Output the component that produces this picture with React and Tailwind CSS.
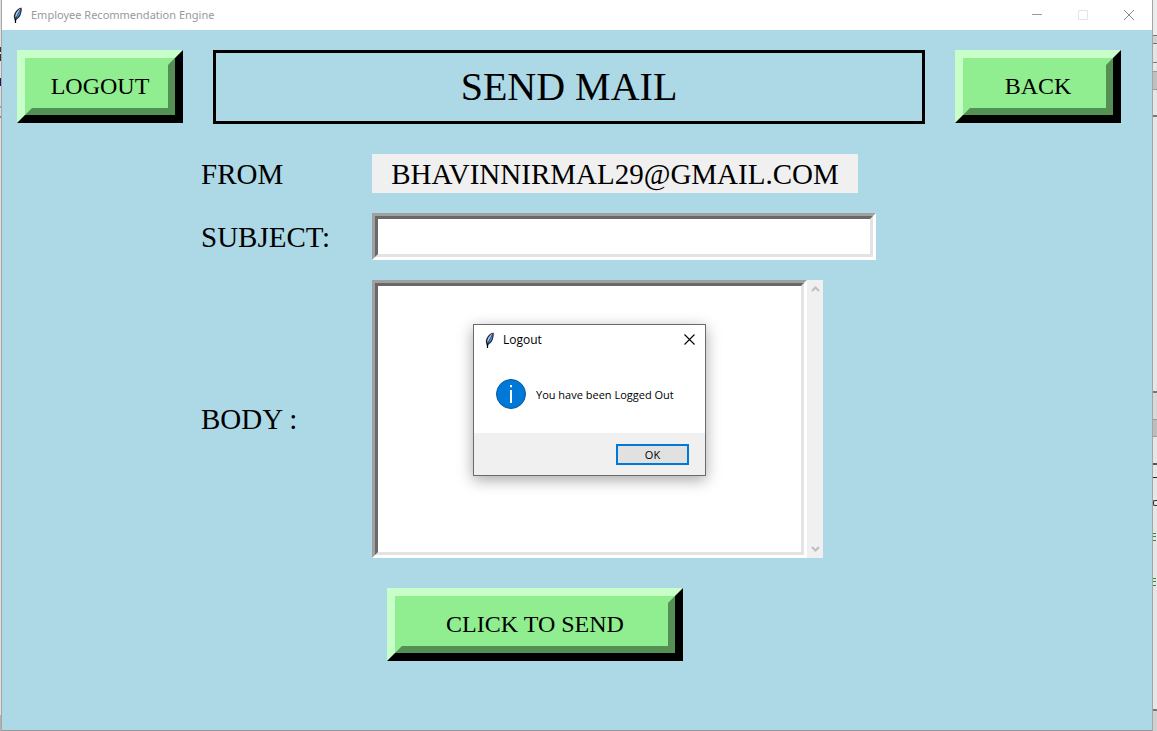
import React from "react";

function Feather() {
  return (
    <svg width="16" height="16" viewBox="0 0 16 16" aria-hidden="true" className="shrink-0">
      <path d="M11.4 0.4C8.6 0.8 5.8 3.4 4.4 6.8C3.6 8.8 3.6 10.8 4.6 12.4L5.2 15.4L6.6 12.4C9 11 10.6 9 11 6.4C11.8 4 12 1.8 11.4 0.4Z" fill="#1d2733" />
      <path d="M10.6 1.6C8.4 2.6 6.4 5 5.4 8L5.2 11C7.2 8.6 8.8 5 10.6 1.6Z" fill="#a9c8ea" />
      <path d="M10.8 2.2C9.2 5 7.4 8.4 5.9 11.6C8.4 10 9.8 8 10.2 5.8Z" fill="#4a8ae0" />
      <path d="M5.5 16V12" fill="none" stroke="#000" strokeWidth="1.2" />
    </svg>
  );
}

function BevelButton({ children, className }) {
  return (
    <button
      type="button"
      className={`flex h-[73px] shrink-0 cursor-pointer border-8 border-t-[#c8ffc8] border-l-[#c8ffc8] border-r-black border-b-black text-2xl text-black ${className}`}
    >
      <span className="flex h-full w-full items-center justify-center border-[7px] border-t-[#90ee90] border-l-[#90ee90] border-r-[#548f54] border-b-[#548f54] bg-[#90ee90] pb-0.5 whitespace-nowrap">
        {children}
      </span>
    </button>
  );
}

const sunkenOuter = "border-[3px] border-t-[#a0a0a0] border-l-[#a0a0a0] border-r-white border-b-white";
const sunkenInner =
  "block border-[3px] border-t-[#696969] border-l-[#696969] border-r-[#e3e3e3] border-b-[#e3e3e3] bg-white px-1 outline-none";

function Chevron({ up }) {
  return (
    <svg width="9" height="6" viewBox="0 0 9 6" aria-hidden="true">
      <path d={up ? "M1 5L4.5 1.5L8 5" : "M1 1L4.5 4.5L8 1"} fill="none" stroke="#bfbfbf" strokeWidth="2" />
    </svg>
  );
}

function TitleBar() {
  return (
    <header className="flex h-[30px] items-center bg-white pl-2 font-['Noto_Sans',sans-serif] text-[11px] text-[#999]">
      <Feather />
      <span className="ml-[5px] flex-1">Employee Recommendation Engine</span>
      <button type="button" aria-label="Minimize" className="flex h-full w-[46px] items-center justify-center">
        <svg width="10" height="10" viewBox="0 0 10 10"><path d="M0 4.5H10" stroke="#999" /></svg>
      </button>
      <button type="button" aria-label="Maximize" disabled className="flex h-full w-[46px] items-center justify-center">
        <svg width="10" height="10" viewBox="0 0 10 10"><path d="M.5 .5H9.5V9.5H.5Z" fill="none" stroke="#e5e5e5" /></svg>
      </button>
      <button type="button" aria-label="Close" className="flex h-full w-[46px] items-center justify-center">
        <svg width="10" height="10" viewBox="0 0 10 10"><path d="M0 0L10 10M10 0L0 10" stroke="#8a8a8a" /></svg>
      </button>
    </header>
  );
}

function LogoutDialog() {
  return (
    <section
      role="dialog"
      aria-labelledby="dialog-title"
      className="absolute top-[324px] left-[473px] w-[233px] border border-[#6b6b6b] bg-white font-['Open_Sans',sans-serif] text-xs text-black shadow-[0_4px_14px_rgba(0,0,0,0.35)]"
    >
      <div className="flex h-[30px] items-center pl-2">
        <Feather />
        <h2 id="dialog-title" className="ml-[5px] flex-1">Logout</h2>
        <button type="button" aria-label="Close dialog" className="flex h-full w-8 items-center justify-center pb-0.5">
          <svg width="11" height="11" viewBox="0 0 11 11"><path d="M.5 .5L10.5 10.5M10.5 .5L.5 10.5" stroke="#000" strokeWidth="1.1" /></svg>
        </button>
      </div>
      <div className="flex h-[78px] items-center gap-2.5 pl-[22px]">
        <svg width="30" height="30" viewBox="0 0 30 30" aria-hidden="true">
          <circle cx="15" cy="15" r="14.5" fill="#0078d7" stroke="#0b5a9c" />
          <path d="M14 6H16V8.2H14ZM14 11H16V24H14Z" fill="#fff" />
        </svg>
        <p className="pt-0.5 text-[11px] whitespace-nowrap">You have been Logged Out</p>
      </div>
      <div className="flex h-[42px] items-center justify-end bg-[#f0f0f0] pr-4">
        <button type="button" className="h-[21px] w-[73px] border-2 border-[#0078d7] bg-[#e1e1e1] text-[11px] leading-none">
          OK
        </button>
      </div>
    </section>
  );
}

const leftEdge = [
  "h-[47px] bg-[#e0e0e0]",
  "h-[5px] bg-[#333]",
  "h-[2px] bg-[#e0e0e0]",
  "h-[7px] bg-[#333]",
  "h-[17px] bg-[#e0e0e0]",
  "h-[8px] bg-[#1a1a66]",
  "h-[20px] bg-[#dcdcdc]",
  "h-[2px] bg-[#6fb4d8]",
  "h-[8px] bg-[#dcdcdc]",
  "h-[2px] bg-[#888]",
  "h-[597px] bg-[#e0e0e0]",
  "flex-1 bg-[#b0b0b0]",
];

const rightEdge = [
  "h-[35px] bg-[#ececec]",
  "h-[9px] border-y border-[#777] bg-[#d0d0d0]",
  "h-[19px] border-b border-[#777] bg-[#e4e4e4]",
  "h-[9px] border-b border-[#999]",
  "h-[18px] border-b border-[#999] bg-[#c0c0c0]",
  "h-[27px] border-b-2 border-[#777]",
  "h-[276px] border-b-2 border-[#777]",
  "h-[26px] bg-[#d8d8d8]",
  "h-[18px] border-y border-[#999] bg-[#bdbdbd]",
  "h-[28px] border-b-2 border-[#555]",
  "h-[13px] border-b border-[#222]",
  "h-[22px]",
  "h-[6px] w-[4px] rounded-l-xs border border-r-0 border-[#333]",
  "h-[27px]",
  "h-[4px] w-[3px] border-y border-[#1d9430]",
  "h-[4px] w-[3px] border-b border-[#1d9430]",
  "h-[37px]",
  "h-[4px] w-[3px] border-y border-[#1d9430]",
  "h-[4px] w-[3px] border-b border-[#1d9430]",
  "h-[125px] border-b-2 border-[#777]",
  "flex-1 bg-[#d0d0d0]",
];

function Edge({ bands }) {
  return bands.map((band, i) => <div key={i} className={`shrink-0 ${band}`} />);
}

export default function App() {
  return (
    <div className="relative flex min-h-screen bg-[#e6e6e6] font-['Liberation_Serif',serif] text-black">
      <div className="flex w-[2px] shrink-0 flex-col border-r border-[#a5a5a5]" aria-hidden="true">
        <Edge bands={leftEdge} />
      </div>
      <main className="flex min-w-0 flex-1 flex-col border-b border-[#999] bg-[#add8e6]">
        <TitleBar />
        <div className="flex gap-[30px] pt-5 pr-[31px] pl-[15px]">
          <BevelButton className="w-[166px]">LOGOUT</BevelButton>
          <h1 className="flex h-[74px] flex-1 items-center justify-center border-[3px] border-black text-[40px]">
            SEND MAIL
          </h1>
          <BevelButton className="w-[166px]">BACK</BevelButton>
        </div>
        <form className="grid grid-cols-[171px_auto] items-center justify-start gap-y-5 pt-[30px] pl-[199px] text-[29px] leading-8">
          <span>FROM</span>
          <output className="flex h-[39px] w-[486px] items-center justify-center bg-[#f0f0f0]">
            BHAVINNIRMAL29@GMAIL.COM
          </output>
          <label htmlFor="subject">SUBJECT:</label>
          <div className={`w-[504px] ${sunkenOuter}`}>
            <input id="subject" type="text" className={`h-[41px] w-full ${sunkenInner}`} />
          </div>
          <label htmlFor="body">BODY :</label>
          <div className="flex h-[278px]">
            <div className={`w-[435px] ${sunkenOuter}`}>
              <textarea id="body" className={`h-full w-full resize-none ${sunkenInner}`} />
            </div>
            <div className="flex w-4 flex-col items-center justify-between bg-[#f0f0f0] py-1.5">
              <Chevron up />
              <Chevron />
            </div>
          </div>
          <div className="col-start-2 pt-2.5 pl-[15px]">
            <BevelButton className="w-[296px]">CLICK TO SEND</BevelButton>
          </div>
        </form>
      </main>
      <div className="flex w-[5px] shrink-0 flex-col overflow-hidden border-l border-[#a5a5a5]" aria-hidden="true">
        <Edge bands={rightEdge} />
      </div>
      <LogoutDialog />
    </div>
  );
}
